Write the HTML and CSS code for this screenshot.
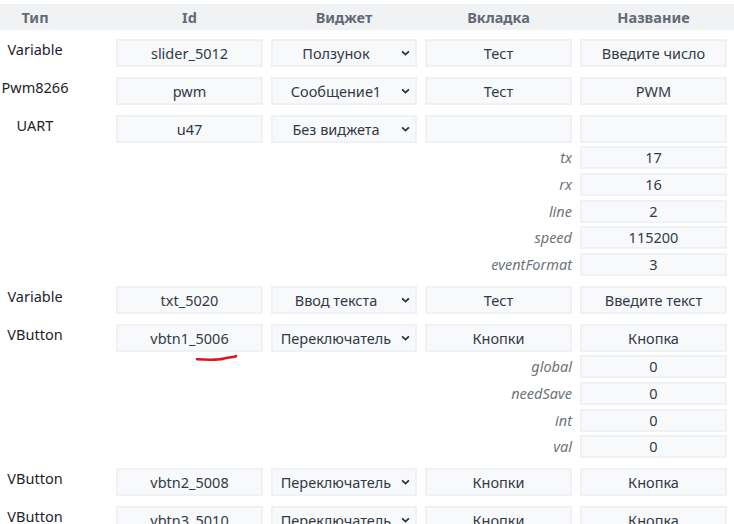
FILE: index.html
```html
<!DOCTYPE html>
<html lang="ru">
<head>
<meta charset="utf-8">
<title>Виджеты</title>
<link rel="stylesheet" href="styles.css">
</head>
<body>
<div class="page">
  <div class="head">
    <div class="grid">
      <div class="hcell type">Тип</div>
      <div class="hcell">Id</div>
      <div class="hcell">Виджет</div>
      <div class="hcell">Вкладка</div>
      <div class="hcell">Название</div>
    </div>
  </div>

  <div class="list">
    <div class="entry">
      <div class="grid main">
        <div class="type">Variable</div>
        <div class="field">slider_5012</div>
        <div class="sel"><span class="sel-text">Ползунок</span><svg class="chev" viewBox="0 0 10 6"><path d="M1.2 1.2 L5 4.8 L8.8 1.2"/></svg></div>
        <div class="field">Тест</div>
        <div class="field">Введите число</div>
      </div>
    </div>

    <div class="entry">
      <div class="grid main">
        <div class="type">Pwm8266</div>
        <div class="field">pwm</div>
        <div class="sel"><span class="sel-text">Сообщение1</span><svg class="chev" viewBox="0 0 10 6"><path d="M1.2 1.2 L5 4.8 L8.8 1.2"/></svg></div>
        <div class="field">Тест</div>
        <div class="field">PWM</div>
      </div>
    </div>

    <div class="entry">
      <div class="grid main">
        <div class="type">UART</div>
        <div class="field">u47</div>
        <div class="sel"><span class="sel-text">Без виджета</span><svg class="chev" viewBox="0 0 10 6"><path d="M1.2 1.2 L5 4.8 L8.8 1.2"/></svg></div>
        <div class="field"></div>
        <div class="field"></div>
      </div>
      <div class="subs">
        <div class="grid sub"><div class="label">tx</div><div class="field small">17</div></div>
        <div class="grid sub"><div class="label">rx</div><div class="field small">16</div></div>
        <div class="grid sub"><div class="label">line</div><div class="field small">2</div></div>
        <div class="grid sub"><div class="label">speed</div><div class="field small">115200</div></div>
        <div class="grid sub"><div class="label">eventFormat</div><div class="field small">3</div></div>
      </div>
    </div>

    <div class="entry">
      <div class="grid main">
        <div class="type">Variable</div>
        <div class="field">txt_5020</div>
        <div class="sel"><span class="sel-text">Ввод текста</span><svg class="chev" viewBox="0 0 10 6"><path d="M1.2 1.2 L5 4.8 L8.8 1.2"/></svg></div>
        <div class="field">Тест</div>
        <div class="field">Введите текст</div>
      </div>
    </div>

    <div class="entry">
      <div class="grid main">
        <div class="type">VButton</div>
        <div class="field">vbtn1_5006</div>
        <div class="sel"><span class="sel-text">Переключатель</span><svg class="chev" viewBox="0 0 10 6"><path d="M1.2 1.2 L5 4.8 L8.8 1.2"/></svg></div>
        <div class="field">Кнопки</div>
        <div class="field">Кнопка</div>
      </div>
      <div class="subs">
        <div class="grid sub"><div class="label">global</div><div class="field small">0</div></div>
        <div class="grid sub"><div class="label">needSave</div><div class="field small">0</div></div>
        <div class="grid sub"><div class="label">int</div><div class="field small">0</div></div>
        <div class="grid sub"><div class="label">val</div><div class="field small">0</div></div>
      </div>
    </div>

    <div class="entry">
      <div class="grid main">
        <div class="type">VButton</div>
        <div class="field">vbtn2_5008</div>
        <div class="sel"><span class="sel-text">Переключатель</span><svg class="chev" viewBox="0 0 10 6"><path d="M1.2 1.2 L5 4.8 L8.8 1.2"/></svg></div>
        <div class="field">Кнопки</div>
        <div class="field">Кнопка</div>
      </div>
    </div>

    <div class="entry">
      <div class="grid main">
        <div class="type">VButton</div>
        <div class="field">vbtn3_5010</div>
        <div class="sel"><span class="sel-text">Переключатель</span><svg class="chev" viewBox="0 0 10 6"><path d="M1.2 1.2 L5 4.8 L8.8 1.2"/></svg></div>
        <div class="field">Кнопки</div>
        <div class="field">Кнопка</div>
      </div>
    </div>
  </div>

  <svg class="mark" viewBox="0 0 44 8" width="44" height="8"><path d="M2 5.2 C8 5.6 14 5.8 20 5.6 C25 5.4 26 5.6 29 4.6 C33 3.6 37 3.4 41 2.2"/></svg>
</div>
</body>
</html>
```

FILE: styles.css
```css
html, body {
  margin: 0;
  padding: 0;
  background: #ffffff;
}

body {
  font-family: "Noto Sans", "Open Sans", sans-serif;
  font-size: 14.5px;
  color: #333a44;
  overflow: hidden;
  height: 524px;
}

.page {
  position: relative;
  padding-top: 4px;
}

.grid {
  display: grid;
  grid-template-columns: 108px 147px 146px 147px 147px;
  column-gap: 8px;
  width: 727px;
}

.head {
  background: #f1f2f4;
  height: 26px;
  margin-bottom: 9px;
}

.hcell {
  height: 26px;
  line-height: 26px;
  text-align: center;
  font-weight: 700;
  color: #646b76;
}

.type {
  width: 70px;
  text-align: center;
  line-height: 20px;
  color: #1f2329;
}

.hcell.type {
  line-height: 26px;
  color: #646b76;
}

.list {
  display: flex;
  flex-direction: column;
  gap: 10px;
}

.entry {
  display: flex;
  flex-direction: column;
}

.main {
  height: 28px;
  align-items: start;
}

.field {
  box-sizing: border-box;
  height: 28px;
  background: #f8f9fb;
  border: 2px solid #eff1f4;
  text-align: center;
  line-height: 24px;
  white-space: nowrap;
  overflow: hidden;
}

.sel {
  position: relative;
  box-sizing: border-box;
  height: 28px;
  background: #f8f9fb;
  border: 2px solid #eff1f4;
  padding: 0 22px 0 6px;
  text-align: center;
  line-height: 24px;
  white-space: nowrap;
  overflow: hidden;
}

.sel-text {
  display: block;
}

.chev {
  position: absolute;
  right: 5px;
  top: 9px;
  width: 9px;
  height: 6px;
  fill: none;
  stroke: #2b313a;
  stroke-width: 2;
}

.subs {
  display: flex;
  flex-direction: column;
  gap: 3.75px;
  margin-top: 3px;
}

.sub {
  height: 23px;
}

.label {
  grid-column: 1 / 5;
  text-align: right;
  font-style: italic;
  color: #6e737b;
  line-height: 23px;
}

.field.small {
  grid-column: 5;
  height: 23px;
  line-height: 19px;
}

.mark {
  position: absolute;
  left: 195px;
  top: 354px;
  fill: none;
  stroke: #e0141b;
  stroke-width: 2.6;
  stroke-linecap: round;
}
```
